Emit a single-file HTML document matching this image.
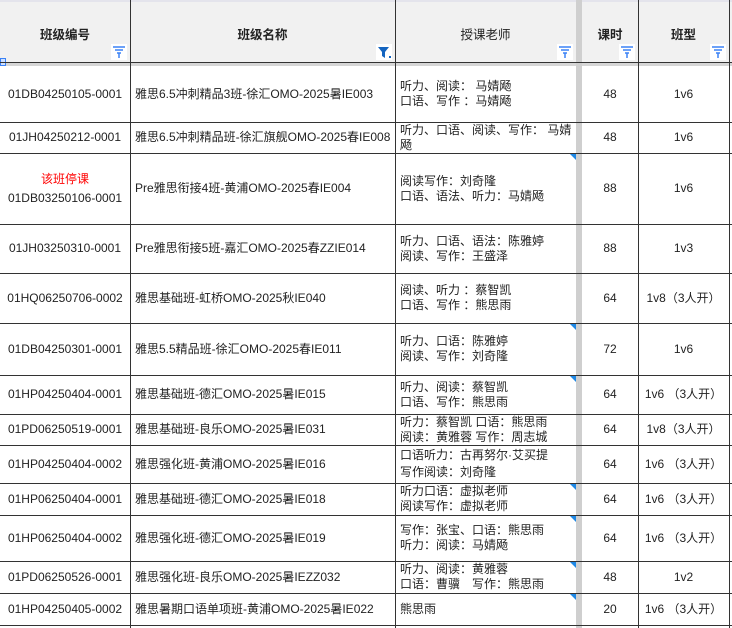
<!DOCTYPE html>
<html><head><meta charset="utf-8"><style>
body{margin:0;width:732px;height:628px;overflow:hidden;background:#fff;font-family:"Liberation Sans","Noto Sans CJK SC",sans-serif;font-size:12px;color:#222;position:relative}
.c{position:absolute;display:flex;align-items:center;box-sizing:border-box;line-height:15px;white-space:nowrap}
.ctr{justify-content:center;text-align:center}
.l{padding-left:4px}
.h{position:absolute;left:0;width:732px;height:1px;background:#333}
.v{position:absolute;top:0;width:1px;height:628px;background:#333}
.hd{position:absolute;top:0;height:62px;background:#f1f1f1}
.ht{position:absolute;top:24px;font-weight:bold;font-size:12.5px;text-align:center}
.fi{position:absolute;top:44px;width:16px;height:16px;background:#fff}
.tri{position:absolute;width:0;height:0;border-top:6px solid #1e88e5;border-left:6px solid transparent}
</style></head><body>
<div class="hd" style="left:0;width:732px"></div>
<div style="position:absolute;left:0;top:62px;width:732px;height:4px;background:#d6d6d6"></div>
<div style="position:absolute;left:0;top:0;width:732px;height:2px;background:#e4e4ec"></div>
<div class="ht" style="left:0;width:130px">班级编号</div>
<div class="ht" style="left:130px;width:265px">班级名称</div>
<div class="ht" style="left:395px;width:181px;font-weight:normal">授课老师</div>
<div class="ht" style="left:582px;width:56px">课时</div>
<div class="ht" style="left:638px;width:91px">班型</div>
<svg class="fi" style="left:111px" viewBox="0 0 16 16"><path d="M2 3h12M4 6h8M6 9h4M8 9v5" stroke="#3b82f6" stroke-width="1.5" fill="none"/></svg>
<svg class="fi" style="left:376px" viewBox="0 0 16 16"><path d="M2 3h11l-4 5v6l-3-2v-4z" fill="#1565c0"/><rect x="13" y="12" width="2" height="2" fill="#1565c0"/></svg>
<svg class="fi" style="left:557px" viewBox="0 0 16 16"><path d="M2 3h12M4 6h8M6 9h4M8 9v5" stroke="#3b82f6" stroke-width="1.5" fill="none"/></svg>
<svg class="fi" style="left:619px" viewBox="0 0 16 16"><path d="M2 3h12M4 6h8M6 9h4M8 9v5" stroke="#3b82f6" stroke-width="1.5" fill="none"/></svg>
<svg class="fi" style="left:710px" viewBox="0 0 16 16"><path d="M2 3h12M4 6h8M6 9h4M8 9v5" stroke="#3b82f6" stroke-width="1.5" fill="none"/></svg>
<div style="position:absolute;left:0;top:58px;width:4px;height:6px;border:1px solid #3b82f6;background:#cfe0ff"></div>

<div class="v" style="left:130px"></div>
<div class="v" style="left:395px"></div>
<div style="position:absolute;left:576px;top:0;width:6px;height:628px;background:#cfcfcf"></div>
<div class="v" style="left:638px"></div>
<div class="v" style="left:729px"></div>
<div class="h" style="top:62px"></div>
<div class="h" style="top:122px"></div>
<div class="h" style="top:153px"></div>
<div class="h" style="top:224px"></div>
<div class="h" style="top:273px"></div>
<div class="h" style="top:323px"></div>
<div class="h" style="top:375px"></div>
<div class="h" style="top:414px"></div>
<div class="h" style="top:445px"></div>
<div class="h" style="top:483px"></div>
<div class="h" style="top:515px"></div>
<div class="h" style="top:561px"></div>
<div class="h" style="top:593px"></div>
<div class="h" style="top:625px"></div>

<!-- rows -->
<div id="rows"></div>
<div class="c ctr" style="left:0;width:130px;top:66px;height:56px">01DB04250105-0001</div>
<div class="c l" style="left:131px;top:66px;height:56px">雅思6.5冲刺精品3班-徐汇OMO-2025暑IE003</div>
<div class="c l" style="left:396px;top:66px;height:56px">听力、阅读： 马婧飏<br>口语、写作 ：马婧飏</div>
<div class="c ctr" style="left:582px;width:56px;top:66px;height:56px">48</div>
<div class="c ctr" style="left:638px;width:91px;top:66px;height:56px">1v6</div>

<div class="c ctr" style="left:0;width:130px;top:122px;height:31px">01JH04250212-0001</div>
<div class="c l" style="left:131px;top:122px;height:31px">雅思6.5冲刺精品班-徐汇旗舰OMO-2025春IE008</div>
<div class="c l" style="left:396px;top:122px;height:31px">听力、口语、阅读、写作： 马婧<br>飏</div>
<div class="c ctr" style="left:582px;width:56px;top:122px;height:31px">48</div>
<div class="c ctr" style="left:638px;width:91px;top:122px;height:31px">1v6</div>

<div class="c ctr" style="left:0;width:130px;top:153px;height:71px;line-height:19px"><span><span style="color:#f00">该班停课</span><br>01DB03250106-0001</span></div>
<div class="c l" style="left:131px;top:153px;height:71px">Pre雅思衔接4班-黄浦OMO-2025春IE004</div>
<div class="c l" style="left:396px;top:153px;height:71px">阅读写作：刘奇隆<br>口语、语法、听力：马婧飏</div>
<div class="c ctr" style="left:582px;width:56px;top:153px;height:71px">88</div>
<div class="c ctr" style="left:638px;width:91px;top:153px;height:71px">1v6</div>

<div class="c ctr" style="left:0;width:130px;top:224px;height:49px">01JH03250310-0001</div>
<div class="c l" style="left:131px;top:224px;height:49px">Pre雅思衔接5班-嘉汇OMO-2025春ZZIE014</div>
<div class="c l" style="left:396px;top:224px;height:49px">听力、口语、语法：陈雅婷<br>阅读、写作：王盛泽</div>
<div class="c ctr" style="left:582px;width:56px;top:224px;height:49px">88</div>
<div class="c ctr" style="left:638px;width:91px;top:224px;height:49px">1v3</div>

<div class="c ctr" style="left:0;width:130px;top:273px;height:50px">01HQ06250706-0002</div>
<div class="c l" style="left:131px;top:273px;height:50px">雅思基础班-虹桥OMO-2025秋IE040</div>
<div class="c l" style="left:396px;top:273px;height:50px">阅读、听力 ：蔡智凯<br>口语、写作 ：熊思雨</div>
<div class="c ctr" style="left:582px;width:56px;top:273px;height:50px">64</div>
<div class="c ctr" style="left:638px;width:91px;top:273px;height:50px">1v8（3人开）</div>

<div class="c ctr" style="left:0;width:130px;top:323px;height:52px">01DB04250301-0001</div>
<div class="c l" style="left:131px;top:323px;height:52px">雅思5.5精品班-徐汇OMO-2025春IE011</div>
<div class="c l" style="left:396px;top:323px;height:52px">听力、口语：陈雅婷<br>阅读、写作：刘奇隆</div>
<div class="c ctr" style="left:582px;width:56px;top:323px;height:52px">72</div>
<div class="c ctr" style="left:638px;width:91px;top:323px;height:52px">1v6</div>

<div class="c ctr" style="left:0;width:130px;top:375px;height:39px">01HP04250404-0001</div>
<div class="c l" style="left:131px;top:375px;height:39px">雅思基础班-德汇OMO-2025暑IE015</div>
<div class="c l" style="left:396px;top:375px;height:39px">听力、阅读：蔡智凯<br>口语、写作：熊思雨</div>
<div class="c ctr" style="left:582px;width:56px;top:375px;height:39px">64</div>
<div class="c ctr" style="left:638px;width:91px;top:375px;height:39px">1v6 （3人开）</div>

<div class="c ctr" style="left:0;width:130px;top:414px;height:31px">01PD06250519-0001</div>
<div class="c l" style="left:131px;top:414px;height:31px">雅思基础班-良乐OMO-2025暑IE031</div>
<div class="c l" style="left:396px;top:414px;height:31px">听力：蔡智凯 口语：熊思雨<br>阅读：黄雅蓉 写作：周志城</div>
<div class="c ctr" style="left:582px;width:56px;top:414px;height:31px">64</div>
<div class="c ctr" style="left:638px;width:91px;top:414px;height:31px">1v8（3人开）</div>

<div class="c ctr" style="left:0;width:130px;top:445px;height:38px">01HP04250404-0002</div>
<div class="c l" style="left:131px;top:445px;height:38px">雅思强化班-黄浦OMO-2025暑IE016</div>
<div class="c l" style="left:396px;top:445px;height:38px;line-height:17px">口语听力：古再努尔·艾买提<br>写作阅读：刘奇隆</div>
<div class="c ctr" style="left:582px;width:56px;top:445px;height:38px">64</div>
<div class="c ctr" style="left:638px;width:91px;top:445px;height:38px">1v6 （3人开）</div>

<div class="c ctr" style="left:0;width:130px;top:483px;height:32px">01HP06250404-0001</div>
<div class="c l" style="left:131px;top:483px;height:32px">雅思基础班-德汇OMO-2025暑IE018</div>
<div class="c l" style="left:396px;top:483px;height:32px">听力口语：虚拟老师<br>阅读写作：虚拟老师</div>
<div class="c ctr" style="left:582px;width:56px;top:483px;height:32px">64</div>
<div class="c ctr" style="left:638px;width:91px;top:483px;height:32px">1v6 （3人开）</div>

<div class="c ctr" style="left:0;width:130px;top:515px;height:46px">01HP06250404-0002</div>
<div class="c l" style="left:131px;top:515px;height:46px">雅思强化班-德汇OMO-2025暑IE019</div>
<div class="c l" style="left:396px;top:515px;height:46px">写作：张宝、口语：熊思雨<br>听力：阅读：马婧飏</div>
<div class="c ctr" style="left:582px;width:56px;top:515px;height:46px">64</div>
<div class="c ctr" style="left:638px;width:91px;top:515px;height:46px">1v6 （3人开）</div>

<div class="c ctr" style="left:0;width:130px;top:561px;height:32px">01PD06250526-0001</div>
<div class="c l" style="left:131px;top:561px;height:32px">雅思强化班-良乐OMO-2025暑IEZZ032</div>
<div class="c l" style="left:396px;top:561px;height:32px">听力、阅读：黄雅蓉<br>口语：曹骥　写作：熊思雨</div>
<div class="c ctr" style="left:582px;width:56px;top:561px;height:32px">48</div>
<div class="c ctr" style="left:638px;width:91px;top:561px;height:32px">1v2</div>

<div class="c ctr" style="left:0;width:130px;top:593px;height:32px">01HP04250405-0002</div>
<div class="c l" style="left:131px;top:593px;height:32px">雅思暑期口语单项班-黄浦OMO-2025暑IE022</div>
<div class="c l" style="left:396px;top:593px;height:32px">熊思雨</div>
<div class="c ctr" style="left:582px;width:56px;top:593px;height:32px">20</div>
<div class="c ctr" style="left:638px;width:91px;top:593px;height:32px">1v6 （3人开）</div>

<div class="tri" style="left:570px;top:154px"></div>
<div class="tri" style="left:570px;top:324px"></div>
<div class="tri" style="left:570px;top:376px"></div>
<div class="tri" style="left:570px;top:484px"></div>
<div class="tri" style="left:570px;top:516px"></div>
<div class="tri" style="left:570px;top:562px"></div>
<div class="tri" style="left:570px;top:594px"></div>
</body></html>
